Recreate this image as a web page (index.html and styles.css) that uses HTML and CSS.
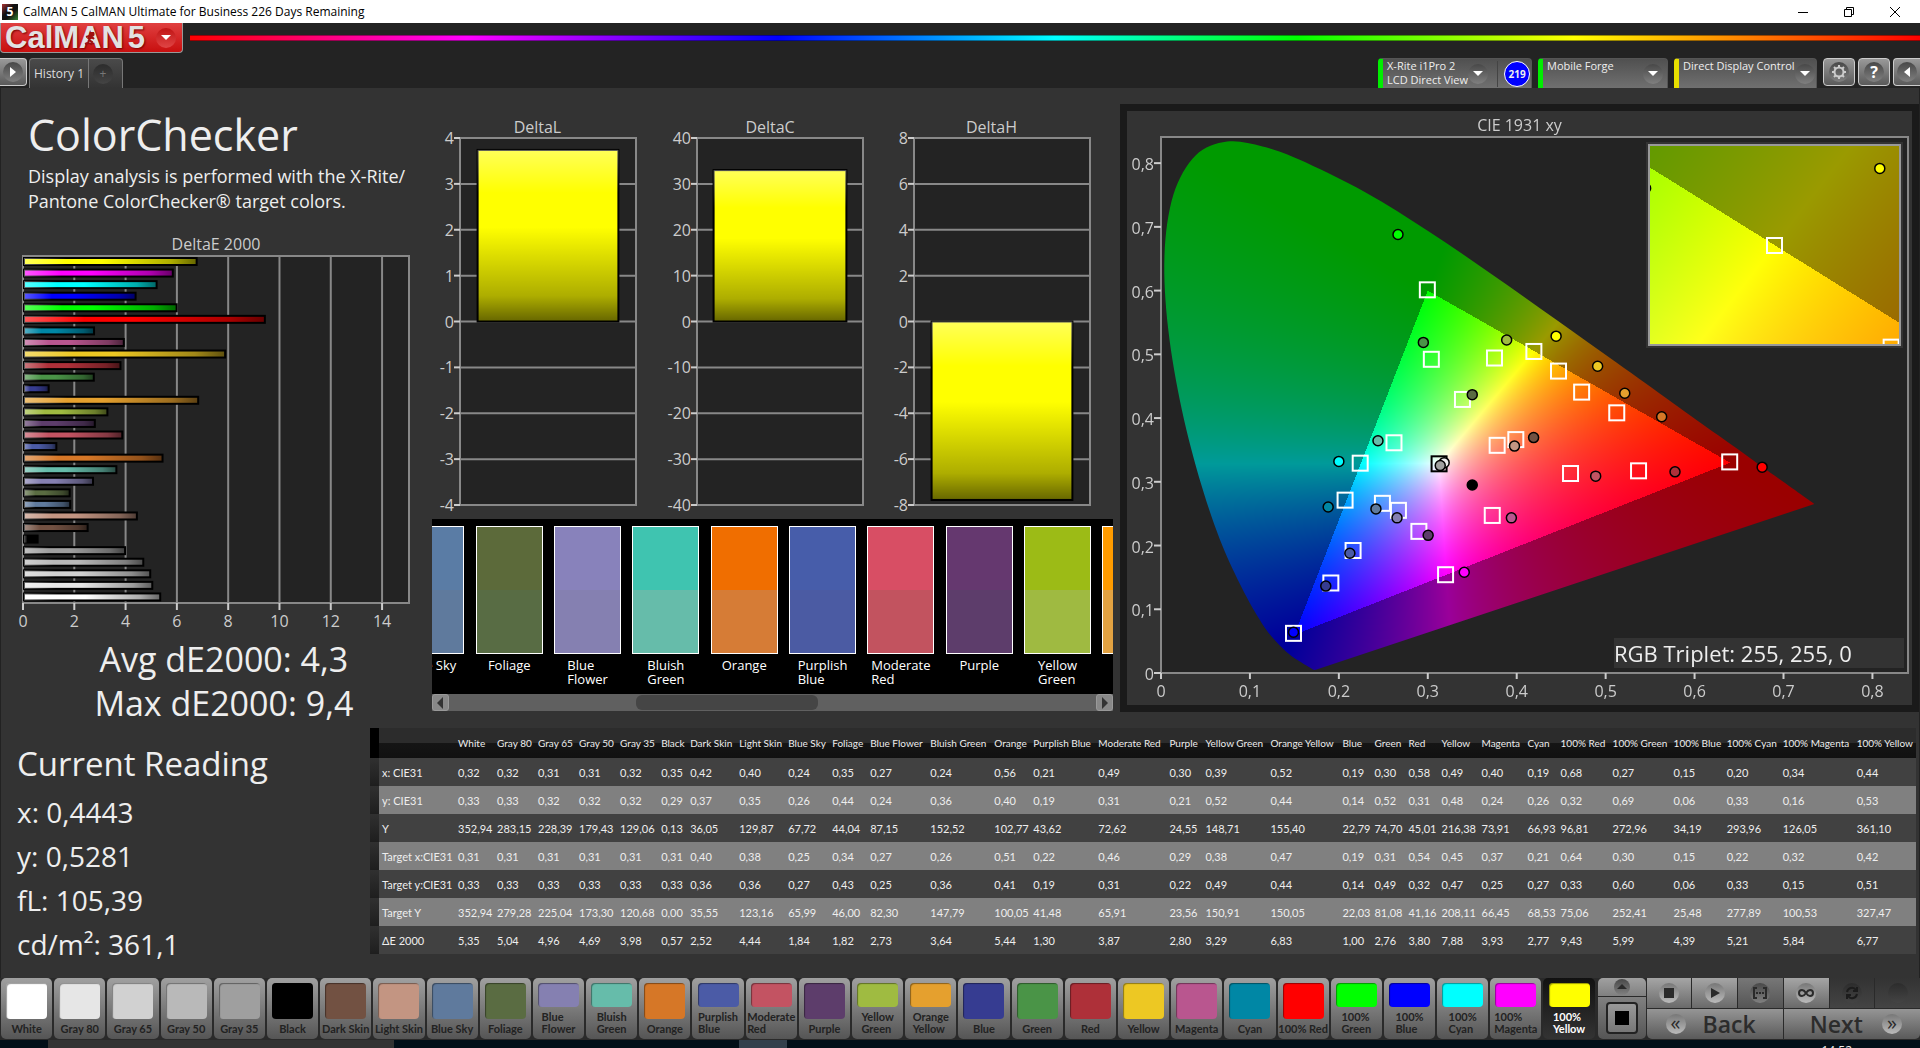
FILE: index.html
```
<!DOCTYPE html>
<html lang="en">

<head>
    <meta charset="UTF-8">
    <meta name="viewport" content="width=device-width, initial-scale=1.0">
    <title>CalMAN 5</title>
    <link rel="stylesheet" href="styles.css">
</head>

<body>
    <div class="titlebar">
        <span class="app-icon">5</span>
        <span class="app-title">CalMAN 5 CalMAN Ultimate for Business 226 Days Remaining</span>
        <div class="win-buttons">
            <button aria-label="Minimize"><svg width="12" height="12"><path d="M1 6.5h10" /></svg></button>
            <button aria-label="Restore"><svg width="12" height="12"><path d="M1.500 3.500h7v7h-7zM3.500 3.500v-2h7v7h-2" /></svg></button>
            <button aria-label="Close"><svg width="12" height="12"><path d="M1 1l10 10M11 1L1 11" /></svg></button>
        </div>
    </div>

    <header>
        <div class="brand-row">
            <button class="logo">
                <span class="logo-text">CalM<span class="logo-a">A<svg class="runner" width="12" height="14" viewBox="0 0 12 14"><circle cx="8" cy="2" r="1.600" /><path d="M2 5l3-1 3 1 2 2M7 5L5 8l3 2-1 3M5 8l-1 3-3 1" /></svg></span>N<span class="logo-five">5</span></span>
                <span class="round red"><svg width="10" height="6"><path d="M0 0h10L5 5z" /></svg></span>
            </button>
            <div class="spectrum"></div>
        </div>
        <div class="tab-row">
            <button class="key first" aria-label="Expand"><span class="round"><svg width="6" height="10"><path d="M0 0v10l6-5z" /></svg></span></button>
            <div class="tabs">
                <button class="tab">History 1</button>
                <button class="tab add" aria-label="Add tab"><span class="round dark">+</span></button>
            </div>
            <div class="devices">
                <div class="device meter">
                    <button class="device-name">X-Rite i1Pro 2<br>LCD Direct View</button>
                    <span class="round"><svg width="10" height="6"><path d="M0 0h10L5 5z" /></svg></span>
                    <span class="badge-cell"><span class="badge">219</span></span>
                </div>
                <div class="device source">
                    <button class="device-name">Mobile Forge</button>
                    <span class="round"><svg width="10" height="6"><path d="M0 0h10L5 5z" /></svg></span>
                </div>
                <div class="device display">
                    <button class="device-name">Direct Display Control</button>
                    <span class="round"><svg width="10" height="6"><path d="M0 0h10L5 5z" /></svg></span>
                </div>
                <div class="keys">
                    <button class="key" aria-label="Settings"><span class="round"><svg class="gear" width="16" height="16" viewBox="0 0 16 16"><circle cx="8" cy="8" r="4.500" /><path d="M8 1v2.500M8 12.500V15M1 8h2.500M12.500 8H15M3 3l2 2M11 11l2 2M13 3l-2 2M5 11l-2 2" /></svg></span></button>
                    <button class="key help" aria-label="Help"><span class="round">?</span></button>
                    <button class="key last" aria-label="Collapse"><span class="round"><svg width="6" height="10"><path d="M6 0v10L0 5z" /></svg></span></button>
                </div>
            </div>
        </div>
    </header>

    <main>
        <div class="top">
            <section class="summary">
                <h1>ColorChecker</h1>
                <p>Display analysis is performed with the X-Rite/<br>Pantone ColorChecker® target colors.</p>
                <svg id="deltaE" class="chart"></svg>
                <div class="totals">
                    <div>Avg dE2000: 4,3</div>
                    <div>Max dE2000: 9,4</div>
                </div>
            </section>

            <section class="middle">
                <div class="deltas">
                    <svg id="deltaL" class="chart"></svg>
                    <svg id="deltaC" class="chart"></svg>
                    <svg id="deltaH" class="chart"></svg>
                </div>
                <div class="strip" id="strip"></div>
                <div class="scrollbar">
                    <button aria-label="Scroll left"><svg width="6" height="12"><path d="M6 0v12L0 6z" /></svg></button>
                    <div class="track"><div class="thumb"></div></div>
                    <button aria-label="Scroll right"><svg width="6" height="12"><path d="M0 0v12l6-6z" /></svg></button>
                </div>
            </section>

            <section class="cie" id="cie">
                <canvas id="cieFill"></canvas>
                <svg id="cieMarks"></svg>
                <div class="triplet">RGB Triplet: 255, 255, 0</div>
            </section>
        </div>

        <div class="bottom">
            <section class="reading">
                <h2>Current Reading</h2>
                <div>x: 0,4443</div>
                <div>y: 0,5281</div>
                <div>fL: 105,39</div>
                <div>cd/m²: 361,1</div>
            </section>
            <div class="table-wrap">
                <table id="results"></table>
            </div>
        </div>
    </main>

    <footer>
        <div class="patches" id="patches"></div>
        <div class="window-size">
            <button class="up" aria-label="Up"><span class="round small"><svg width="10" height="6"><path d="M0 5h10L5 0z" /></svg></span></button>
            <button class="full" aria-label="Pattern window"><span class="frame"><span class="square"></span></span></button>
        </div>
        <div class="transport">
            <button aria-label="Stop"><span class="round pale"><svg width="10" height="10"><path d="M0 0h10v10H0z" /></svg></span></button>
            <button aria-label="Play"><span class="round pale"><svg width="10" height="12"><path d="M1 1v10l9-5z" /></svg></span></button>
            <button class="dim" aria-label="Read series"><span class="round"><svg class="line" width="14" height="12"><path d="M4 1H1v10h3M10 1h3v10h-3M3 6h2M6 6h2M9 6h2" /></svg></span></button>
            <button aria-label="Continuous"><span class="round pale"><svg class="line" width="16" height="10"><path d="M8 5C6 2 5 2 4 2a3 3 0 0 0 0 6c1 0 2 0 4-3s3-3 4-3a3 3 0 0 1 0 6c-1 0-2 0-4-3z" /></svg></span></button>
            <button class="off" aria-label="Refresh"><span class="round dark"><svg class="line heavy" width="14" height="14"><path d="M2 6a5 5 0 0 1 9-2M12 1v4H8M12 8a5 5 0 0 1-9 2M2 13V9h4" /></svg></span></button>
            <button class="off" aria-label="Record"><span class="round dark"></span></button>
            <button class="nav"><span class="round pale">«</span><span class="nav-text">Back</span></button>
            <button class="nav next"><span class="nav-text">Next</span><span class="round pale">»</span></button>
        </div>
    </footer>
    <div class="taskbar">
        <div class="task-search"></div>
        <div class="task-active"></div>
        <div class="clock">14:52</div>
    </div>

    <script src="script.js"></script>
</body>

</html>
```
FILE: styles.css
```
* {
    box-sizing: border-box;
}

body {
    margin: 0;
    height: 100vh;
    display: flex;
    flex-direction: column;
    overflow: hidden;
    background: #232323;
    color: #eee;
    font-family: "Open Sans", "Noto Sans", sans-serif;
}

button {
    font-family: inherit;
    border: none;
    padding: 0;
    margin: 0;
    background: none;
    color: inherit;
}

svg {
    display: block;
}

/* window title */
.titlebar {
    height: 23px;
    flex: none;
    display: flex;
    align-items: center;
    background: #fff;
    color: #000;
    font-size: 12px;
}

.app-icon {
    width: 16px;
    height: 16px;
    margin: 0 5px 0 2px;
    background: linear-gradient(135deg, #a33, #111 40%, #111 60%, #383);
    color: #fff;
    font-weight: bold;
    line-height: 16px;
    text-align: center;
}

.win-buttons {
    margin-left: auto;
    padding-right: 2px;
    display: flex;
}

.win-buttons button {
    width: 46px;
    height: 22px;
    display: flex;
    align-items: center;
    justify-content: center;
}

.win-buttons path {
    fill: none;
    stroke: #000;
}

/* header */
header {
    height: 65px;
    flex: none;
    display: flex;
    flex-direction: column;
    justify-content: space-between;
}

.brand-row {
    display: flex;
    gap: 7px;
}

.logo {
    width: 183px;
    height: 30px;
    padding: 0 6px 0 4px;
    display: flex;
    align-items: center;
    justify-content: space-between;
    border: 1px solid #999;
    border-top: none;
    border-radius: 0 0 4px 4px;
    background: linear-gradient(#e04040, #c80f0f);
}

.logo-text {
    font-family: "Liberation Sans", sans-serif;
    font-weight: bold;
    font-size: 31px;
    line-height: 26px;
    color: #e2e2e2;
    text-shadow: 1px 1px 2px #700;
}

.logo-a {
    position: relative;
}

.logo-five {
    margin-left: 4px;
}

.runner {
    position: absolute;
    left: 5px;
    top: 12px;
    fill: #a01010;
    stroke: #a01010;
    stroke-width: 2;
}

.runner path {
    fill: none;
}

.spectrum {
    flex: 1;
    height: 6px;
    margin-top: 12px;
    border-top: 1px solid rgba(0, 0, 0, 0.4);
    border-bottom: 1px solid rgba(0, 0, 0, 0.4);
    background: linear-gradient(to right, #f00, #f0f 16%, #00f 34%, #0ff 50%, #0f0 64%, #ff0 80%, #f00);
}

.round {
    width: 20px;
    height: 20px;
    flex: none;
    display: flex;
    align-items: center;
    justify-content: center;
    border-radius: 50%;
    background: linear-gradient(#484848, #808080);
    fill: #fff;
    color: #fff;
}

.round.red {
    background: linear-gradient(#c01515, #e04545);
}

.round.dark {
    background: linear-gradient(#2c2c2c, #444);
    color: #777;
}

.round.pale {
    background: linear-gradient(#777, #bbb);
}

.round.small {
    width: 16px;
    height: 16px;
}

.tab-row {
    height: 30px;
    display: flex;
    align-items: flex-start;
}

.key {
    width: 32px;
    height: 28px;
    display: flex;
    align-items: center;
    justify-content: center;
    border: 1px solid #ccc;
    border-radius: 4px;
    background: linear-gradient(#999, #5a5a5a);
}

.key.first {
    width: 27px;
    border-left: none;
    border-radius: 0 4px 4px 0;
}

.key.last {
    width: 27px;
    border-right: none;
    border-radius: 4px 0 0 4px;
}

.key.help {
    font-size: 16px;
    font-weight: bold;
}

.gear {
    fill: none;
    stroke: #ccc;
    stroke-width: 2;
}

.tabs {
    display: flex;
    height: 30px;
    margin-left: 2px;
    border: 1px solid #777;
    border-bottom: none;
    border-radius: 4px 4px 0 0;
    background: linear-gradient(#4a4a4a, #333);
}

.tab {
    padding: 0 4px;
    font-size: 12px;
    color: #ddd;
}

.tab.add {
    width: 34px;
    border-left: 1px solid #777;
}

.devices {
    margin-left: auto;
    display: flex;
    gap: 6px;
}

.device {
    height: 30px;
    display: flex;
    align-items: center;
    justify-content: space-between;
    border: 1px solid #555;
    border-bottom: none;
    border-left: 5px solid #0e0;
    border-radius: 4px 4px 0 0;
    background: linear-gradient(#505050, #707070);
}

.device-name {
    align-self: flex-start;
    padding-left: 4px;
    font-size: 11px;
    line-height: 14px;
    text-align: left;
    white-space: nowrap;
}

.meter {
    width: 154px;
}

.meter .round {
    margin: 0 9px 0 auto;
}

.source {
    width: 130px;
    padding-right: 4px;
}

.display {
    width: 143px;
    padding-right: 8px;
    border-left-color: #e8e000;
}

.badge-cell {
    padding: 0 1px 0 6px;
    border-left: 1px solid #444;
}

.badge {
    width: 26px;
    height: 26px;
    display: block;
    border: 1px solid #fff;
    border-radius: 50%;
    background: #00f;
    font-size: 10px;
    font-weight: bold;
    line-height: 24px;
    text-align: center;
}

.keys {
    display: flex;
    gap: 3px;
}

/* main area */
main {
    flex: 1;
    min-height: 0;
    display: grid;
    grid-template-rows: 64fr 25fr;
    background: #333;
    border-right: 1px solid #222;
    box-shadow: inset 1px 0 #222;
}

.top {
    min-height: 0;
    display: grid;
    grid-template-columns: 22.5% 35.5% 42%;
}

.summary {
    min-width: 0;
    padding-top: 18px;
    display: flex;
    flex-direction: column;
}

h1 {
    margin: 0 0 0 28px;
    font-size: 43px;
    line-height: 58px;
    font-weight: normal;
}

.summary p {
    margin: 0 0 0 28px;
    font-size: 18px;
    line-height: 25px;
    white-space: nowrap;
}

.chart {
    flex: 1;
    width: 100%;
    min-width: 0;
    min-height: 0;
}

.summary .chart {
    margin-top: 22px;
}

.totals {
    padding: 3px 0 3px 16px;
    font-size: 34px;
    line-height: 44px;
    text-align: center;
}

.middle {
    min-width: 0;
    padding: 25px 0 17px;
    display: flex;
    flex-direction: column;
}

.deltas {
    flex: 1;
    min-height: 0;
    display: grid;
    grid-template-columns: 205px 227px 1fr;
    padding-right: 22px;
}

.deltas .chart {
    height: 100%;
}

svg text {
    font-size: 16px;
    fill: #ccc;
}

.strip {
    height: 175px;
    padding-top: 7px;
    display: flex;
    overflow: hidden;
    background: #000;
}

.strip-item {
    flex: 0 0 11.5%;
    display: flex;
    flex-direction: column;
    align-items: center;
    font-size: 13px;
    line-height: 14px;
    color: #fff;
    white-space: nowrap;
}

.strip-item:first-child {
    margin-left: -40px;
}

.strip-color {
    width: 67px;
    height: 128px;
    margin-bottom: 4px;
    border: 1px solid #fff;
}

.strip-color div {
    height: 50%;
}

.scrollbar {
    height: 17px;
    display: flex;
    background: #606060;
}

.scrollbar button {
    width: 17px;
    display: flex;
    align-items: center;
    justify-content: center;
    border: 1px solid #999;
    border-radius: 3px;
    background: #888;
    fill: #333;
}

.track {
    flex: 1;
    padding: 1px 0;
}

.thumb {
    width: 28%;
    height: 15px;
    margin-left: 29%;
    border-radius: 6px;
    background: #454545;
}

.cie {
    position: relative;
    min-width: 0;
    margin: 16px 0 16px 7px;
    border: 7px solid #1a1a1a;
    background: #333;
}

.cie canvas,
.cie > svg {
    position: absolute;
    left: 0;
    top: 0;
    width: 100%;
    height: 100%;
}

.triplet {
    position: absolute;
    right: 8px;
    bottom: 37px;
    width: 290px;
    background: #333;
    font-size: 22px;
    line-height: 30px;
}

.bottom {
    min-height: 0;
    display: grid;
    grid-template-columns: 370px 1fr;
}

.reading {
    padding: 14px 0 0 17px;
    font-size: 28px;
    line-height: 44px;
}

h2 {
    margin: 0 0 4px;
    font-size: 33px;
    line-height: 44px;
    font-weight: normal;
}

/* results */
.table-wrap {
    padding-right: 3px;
}

table {
    width: 100%;
    border-collapse: collapse;
    table-layout: fixed;
    font-family: Lato, sans-serif;
    font-size: 11px;
    white-space: nowrap;
}

th,
td {
    padding: 0 0 0 3px;
    text-align: left;
    font-weight: normal;
}

thead tr {
    height: 30px;
    background: linear-gradient(#2c2c2c 50%, #151515 50%, #111);
}

thead th {
    font-size: 10px;
}

tbody tr {
    height: 28px;
    background: #414141;
}

tbody tr:nth-child(even) {
    background: #808080;
}

.gutter {
    background: linear-gradient(#303030, #1e1e1e);
}

thead .gutter {
    background: #000;
}

/* bottom bar */
footer {
    height: 62px;
    flex: none;
    display: flex;
    background: #2a2a2a;
    color: #222;
}

.patches {
    flex: 0 0 83.1%;
    display: flex;
    gap: 2px;
    padding: 0 1px;
}

.patch {
    flex: 1 1 0;
    min-width: 0;
    height: 61px;
    padding: 5px 0 4px;
    display: flex;
    flex-direction: column;
    align-items: center;
    border-radius: 5px;
    background: linear-gradient(#a0a0a0, #555);
    font-family: Lato, sans-serif;
    font-size: 11px;
    font-weight: bold;
    line-height: 12px;
    text-align: left;
    white-space: nowrap;
}

.patch i {
    flex: 1;
    width: 41px;
    margin-bottom: 4px;
    border-radius: 4px;
    box-shadow: inset 1px 1px 1px rgba(0, 0, 0, 0.4);
}

.patch.active {
    background: linear-gradient(#111, #333);
    color: #fff;
}

.window-size {
    width: 48px;
    margin: 0 1px 0 2px;
    display: flex;
    flex-direction: column;
    gap: 1px;
}

.window-size button {
    display: flex;
    align-items: center;
    justify-content: center;
    background: linear-gradient(#a0a0a0, #808080);
}

.window-size .up {
    height: 18px;
    border-radius: 5px 5px 0 0;
}

.window-size .full {
    height: 42px;
    border-radius: 0 0 5px 5px;
    background: linear-gradient(#808080, #555);
}

.window-size svg,
.transport svg {
    fill: #2a2a2a;
}

.frame {
    width: 32px;
    height: 32px;
    padding: 7px;
    border: 2px solid #222;
    border-radius: 4px;
    background: linear-gradient(#999, #777);
}

.square {
    display: block;
    height: 14px;
    background: #000;
}

.transport {
    flex: 1;
    display: grid;
    grid-template-columns: repeat(6, 1fr);
    grid-template-rows: 30px 30px;
    gap: 1px;
}

.transport button {
    display: flex;
    align-items: center;
    justify-content: center;
    background: linear-gradient(#a5a5a5, #6a6a6a);
}

.transport .dim {
    background: linear-gradient(#777, #555);
}

.transport .off {
    background: linear-gradient(#333, #444);
}

.transport .line {
    fill: none;
    stroke: #2a2a2a;
    stroke-width: 2;
}

.transport .heavy {
    stroke: #1c1c1c;
}

.transport .nav {
    grid-column: span 3;
    gap: 17px;
    padding-right: 8px;
    border-radius: 0 0 0 5px;
    background: linear-gradient(#959595, #5a5a5a);
}

.transport .next {
    gap: 19px;
    padding: 0 0 0 8px;
    border-radius: 0 0 5px 0;
}

.nav .round {
    color: #2a2a2a;
    font-size: 20px;
    line-height: 16px;
    padding-bottom: 3px;
}

.nav-text {
    font-size: 23px;
    line-height: 28px;
    font-weight: 600;
    color: #2c2c2c;
}

.taskbar {
    height: 8px;
    flex: none;
    display: flex;
    overflow: hidden;
    background: #020f18;
}

.task-search {
    flex: 0 0 18%;
    margin-left: 2.5%;
    background: #333;
}

.task-active {
    flex: 0 0 2.5%;
    margin-left: 18%;
    background: #33404c;
}

.clock {
    margin: 3px 68px 0 auto;
    font-size: 12px;
    line-height: 16px;
}
```
FILE: script.js
```
const names = ['White', 'Gray 80', 'Gray 65', 'Gray 50', 'Gray 35', 'Black', 'Dark Skin', 'Light Skin', 'Blue Sky', 'Foliage',
    'Blue Flower', 'Bluish Green', 'Orange', 'Purplish Blue', 'Moderate Red', 'Purple', 'Yellow Green', 'Orange Yellow', 'Blue', 'Green',
    'Red', 'Yellow', 'Magenta', 'Cyan', '100% Red', '100% Green', '100% Blue', '100% Cyan', '100% Magenta', '100% Yellow'];

const colors = ['#fff', '#e6e6e6', '#d1d1d1', '#b9b9b9', '#9f9f9f', '#000', '#725142', '#c39582', '#5f7a9d', '#5a6c42',
    '#8580b1', '#66bcaa', '#d67727', '#4b5ba6', '#c35362', '#5d3d6b', '#9fbb41', '#e5a02e', '#363c91', '#4a9447',
    '#ae3039', '#edc823', '#b9568f', '#0087a5', '#f00', '#0f0', '#00f', '#0ff', '#f0f', '#ff0'];

const rows = {
    'x: CIE31': '0,32 0,32 0,31 0,31 0,32 0,35 0,42 0,40 0,24 0,35 0,27 0,24 0,56 0,21 0,49 0,30 0,39 0,52 0,19 0,30 0,58 0,49 0,40 0,19 0,68 0,27 0,15 0,20 0,34 0,44',
    'y: CIE31': '0,33 0,33 0,32 0,32 0,32 0,29 0,37 0,35 0,26 0,44 0,24 0,36 0,40 0,19 0,31 0,21 0,52 0,44 0,14 0,52 0,31 0,48 0,24 0,26 0,32 0,69 0,06 0,33 0,16 0,53',
    'Y': '352,94 283,15 228,39 179,43 129,06 0,13 36,05 129,87 67,72 44,04 87,15 152,52 102,77 43,62 72,62 24,55 148,71 155,40 22,79 74,70 45,01 216,38 73,91 66,93 96,81 272,96 34,19 293,96 126,05 361,10',
    'Target x:CIE31': '0,31 0,31 0,31 0,31 0,31 0,31 0,40 0,38 0,25 0,34 0,27 0,26 0,51 0,22 0,46 0,29 0,38 0,47 0,19 0,31 0,54 0,45 0,37 0,21 0,64 0,30 0,15 0,22 0,32 0,42',
    'Target y:CIE31': '0,33 0,33 0,33 0,33 0,33 0,33 0,36 0,36 0,27 0,43 0,25 0,36 0,41 0,19 0,31 0,22 0,49 0,44 0,14 0,49 0,32 0,47 0,25 0,27 0,33 0,60 0,06 0,33 0,15 0,51',
    'Target Y': '352,94 279,28 225,04 173,30 120,68 0,00 35,55 123,16 65,99 46,00 82,30 147,79 100,05 41,48 65,91 23,56 150,91 150,05 22,03 81,08 41,16 208,11 66,45 68,53 75,06 252,41 25,48 277,89 100,53 327,47',
    'ΔE 2000': '5,35 5,04 4,96 4,69 3,98 0,57 2,52 4,44 1,84 1,82 2,73 3,64 5,44 1,30 3,87 2,80 3,29 6,83 1,00 2,76 3,80 7,88 3,93 2,77 9,43 5,99 4,39 5,21 5,84 6,77'
};

// relative widths: gutter, row label, then one per color
const colWidths = [9, 76, 39, 41, 41, 41, 41, 29, 49, 49, 44, 38, 60, 64, 39, 65, 71, 36, 65, 72, 32, 34, 33, 40, 46, 33, 52, 61, 53, 56, 74, 62];

// measured color on top, target below
const strip = [
    ['Blue Sky', '#5a7ca5', '#5f7a9d'],
    ['Foliage', '#5c6a3a', '#586c44'],
    ['Blue<br>Flower', '#8882bb', '#8580b1'],
    ['Bluish<br>Green', '#3fc4b0', '#66bcaa'],
    ['Orange', '#f06e00', '#d67c36'],
    ['Purplish<br>Blue', '#475daa', '#4b5ba3'],
    ['Moderate<br>Red', '#d84e64', '#c2535f'],
    ['Purple', '#65386f', '#5d3d6b'],
    ['Yellow<br>Green', '#9cbb16', '#9fba41'],
    ['Orange<br>Yellow', '#ff9b00', '#e2a242']
];

const targets = [[.2995, .602], [.304, .493], [.375, .495], [.339, .43], [.262, .362], [.224, .33], [.378, .358], [.207, .272],
    [.249, .267], [.267, .256], [.29, .223], [.3725, .248], [.216, .193], [.191, .142], [.32, .155], [.149, .063], [.4193, .5053],
    [.447, .4745], [.473, .4415], [.5125, .409], [.399, .367], [.4605, .3138], [.537, .318], [.6395, .332]];

const measured = [[.2665, .688, '#0f0'], [.295, .5187, '#4a9447'], [.3887, .5225, '#9fbb41'], [.35, .4367, '#5a6c42'],
    [.244, .3645, '#66bcaa'], [.2, .332, '#0ff'], [.188, .2605, '#0087a5'], [.2417, .2575, '#5f7a9d'], [.2654, .2434, '#8580b1'],
    [.3004, .216, '#5d3d6b'], [.35, .295, '#000'], [.394, .2434, '#b9568f'], [.2124, .1878, '#4b5ba6'], [.1853, .1364, '#363c91'],
    [.341, .158, '#f0f'], [.149, .064, '#00f'], [.3184, .33, '#eee'], [.314, .3254, '#a0a0a0'], [.4443, .5285, '#ff0'],
    [.491, .4813, '#edc823'], [.5215, .439, '#e5a02e'], [.563, .402, '#d67727'], [.419, .3694, '#725142'], [.3975, .356, '#c39582'],
    [.4888, .3089, '#c35362'], [.578, .3156, '#ae3039'], [.676, .323, '#f00']];

const locus = [[.1741, .005], [.1714, .0051], [.1644, .0109], [.1566, .0177], [.144, .0297], [.1241, .0578], [.1096, .0868],
    [.0913, .1327], [.0687, .2007], [.0454, .295], [.0235, .4127], [.0082, .5384], [.0039, .6548], [.0139, .7502], [.0389, .812],
    [.0743, .8338], [.1142, .8262], [.1547, .8059], [.2296, .7543], [.3016, .6923], [.3731, .6245], [.4441, .5547], [.5125, .4866],
    [.5752, .4242], [.627, .3725], [.6658, .334], [.6915, .3083], [.719, .2809], [.7347, .2653]];

function num(text) {
    return parseFloat(text.replace(',', '.'));
}

function line(x1, y1, x2, y2, color, width) {
    return `<line x1="${x1}" y1="${y1}" x2="${x2}" y2="${y2}" stroke="${color}" stroke-width="${width}"/>`;
}

function label(x, y, text, anchor) {
    return `<text x="${x}" y="${y}" text-anchor="${anchor}">${text}</text>`;
}

function shade(id, x2, y2) {
    return `<defs><linearGradient id="${id}" x2="${x2}" y2="${y2}">
        <stop offset="0" stop-color="#fff" stop-opacity="0.35"/><stop offset="0.25" stop-color="#fff" stop-opacity="0"/>
        <stop offset="0.45" stop-color="#000" stop-opacity="0"/><stop offset="0.85" stop-color="#000" stop-opacity="0.32"/>
        <stop offset="1" stop-color="#000" stop-opacity="0.6"/></linearGradient></defs>`;
}

function bar(x, y, w, h, color, shadeId) {
    const box = `x="${x}" y="${y}" width="${w}" height="${h}"`;
    return `<rect ${box} fill="${color}" stroke="#000" stroke-width="2"/><rect ${box} fill="url(#${shadeId})"/>`;
}

function drawDeltaE() {
    const svg = document.getElementById('deltaE');
    const left = 23, top = 20, right = svg.clientWidth - 23, bottom = svg.clientHeight - 31;
    const unit = (right - left) / 15.05;
    let out = shade('shadeH', 1, 0);
    out += `<rect x="${left}" y="${top}" width="${right - left}" height="${bottom - top}" fill="#232323" stroke="#888" stroke-width="2"/>`;
    for (let v = 0; v <= 14; v += 2) {
        const x = left + v * unit;
        out += line(x, top, x, bottom, '#888', 2) + line(x, bottom, x, bottom + 7, '#ccc', 2);
        out += label(x, bottom + 24, v, 'middle');
    }
    const values = rows['ΔE 2000'].split(' ').map(num).reverse();
    const step = (bottom - top) / values.length;
    values.forEach((v, i) => {
        out += bar(left + 1, top + i * step + 2, v * unit - 1, 7, colors[29 - i], 'shadeH');
    });
    out += label((left + right) / 2, top - 6, 'DeltaE 2000', 'middle');
    svg.innerHTML = out;
}

function drawDelta(id, left, max, value) {
    const svg = document.getElementById(id);
    const top = 25, right = svg.clientWidth - 1, bottom = svg.clientHeight - 14;
    const w = right - left, half = (bottom - top) / 2, zero = top + half;
    let out = shade(id + 'Shade', 0, 1);
    out += `<rect x="${left}" y="${top}" width="${w}" height="${bottom - top}" fill="#232323" stroke="#888" stroke-width="2"/>`;
    for (let i = -4; i <= 4; i++) {
        const y = zero - i * half / 4;
        out += line(left, y, right, y, '#888', 2) + line(left - 6, y, left, y, '#ccc', 2);
        out += label(left - 6, y + 6, i * max / 4, 'end');
    }
    const h = Math.abs(value) / max * half;
    out += bar(left + w * 0.1, value > 0 ? zero - h : zero, w * 0.8, h, '#ff0', id + 'Shade');
    out += label(left + w * 0.44, top - 5, id.replace('d', 'D'), 'middle');
    svg.innerHTML = out;
}

// fill an area with the chromaticity colors, darker outside Rec.709
function fillColors(ctx, area) {
    const w = Math.round(area.w), h = Math.round(area.h);
    const tmp = document.createElement('canvas');
    tmp.width = w;
    tmp.height = h;
    const tctx = tmp.getContext('2d');
    const img = tctx.createImageData(w, h);
    for (let j = 0; j < h; j++) {
        for (let i = 0; i < w; i++) {
            const x = area.x0 + (i + 0.5) / w * (area.x1 - area.x0);
            const y = area.y1 - (j + 0.5) / h * (area.y1 - area.y0);
            const X = x / y, Z = (1 - x - y) / y;
            const r = 3.2406 * X - 1.5372 - 0.4986 * Z;
            const g = -0.9689 * X + 1.8758 + 0.0415 * Z;
            const b = 0.0557 * X - 0.204 + 1.057 * Z;
            const k = (Math.min(r, g, b) < 0 ? 154 : 255) / Math.max(r, g, b);
            const p = (j * w + i) * 4;
            img.data[p] = r * k;
            img.data[p + 1] = g * k;
            img.data[p + 2] = b * k;
            img.data[p + 3] = 255;
        }
    }
    tctx.putImageData(img, 0, 0);
    ctx.drawImage(tmp, area.left, area.top);
}

function marks(area, offX, offY) {
    const px = x => offX + (x - area.x0) / (area.x1 - area.x0) * area.w;
    const py = y => offY + (area.y1 - y) / (area.y1 - area.y0) * area.h;
    const square = (x, y, c) => `<rect x="${px(x) - 7.5}" y="${py(y) - 7}" width="15" height="15" fill="none" stroke="${c}" stroke-width="2"/>`;
    let out = targets.map(t => square(t[0], t[1], '#fff')).join('');
    out += square(.3127, .329, '#000');
    out += measured.map(m => `<circle cx="${px(m[0])}" cy="${py(m[1])}" r="5" fill="${m[2]}" stroke="#000" stroke-width="1.5"/>`).join('');
    return out;
}

function drawCie() {
    const box = document.getElementById('cie');
    const W = box.clientWidth, H = box.clientHeight;
    const canvas = document.getElementById('cieFill');
    canvas.width = W;
    canvas.height = H;
    const ctx = canvas.getContext('2d');
    const a = { left: 34, top: 26, w: W - 38, h: H - 58, x0: 0, x1: 0.84, y0: 0, y1: 0.841 };
    ctx.fillStyle = '#232323';
    ctx.fillRect(a.left, a.top, a.w, a.h);

    const pts = locus.map(p => [a.left + p[0] / a.x1 * a.w, a.top + (a.y1 - p[1]) / a.y1 * a.h]);
    ctx.save();
    ctx.beginPath();
    ctx.moveTo(pts[0][0], pts[0][1]);
    for (let i = 0; i < pts.length - 1; i++) {
        const p0 = pts[Math.max(i - 1, 0)], p1 = pts[i], p2 = pts[i + 1], p3 = pts[Math.min(i + 2, pts.length - 1)];
        ctx.bezierCurveTo(p1[0] + (p2[0] - p0[0]) / 6, p1[1] + (p2[1] - p0[1]) / 6,
            p2[0] - (p3[0] - p1[0]) / 6, p2[1] - (p3[1] - p1[1]) / 6, p2[0], p2[1]);
    }
    ctx.closePath();
    ctx.clip();
    fillColors(ctx, a);
    ctx.restore();

    // magnified view round the current target
    const z = { w: Math.round(a.w * 0.336), h: Math.round(a.h * 0.374), x0: .3895, x1: .4491, y0: .475, y1: .5356 };
    z.left = a.left + a.w - z.w - 8;
    z.top = a.top + 8;
    ctx.fillStyle = '#333';
    ctx.fillRect(z.left - 3, z.top - 3, z.w + 6, z.h + 6);
    fillColors(ctx, z);

    let out = `<rect x="${a.left}" y="${a.top}" width="${a.w}" height="${a.h}" fill="none" stroke="#888" stroke-width="2"/>`;
    for (let i = 0; i <= 8; i++) {
        const x = a.left + i / 10 / a.x1 * a.w, y = a.top + a.h - i / 10 / a.y1 * a.h;
        const text = i ? '0,' + i : '0';
        out += line(x, a.top + a.h, x, a.top + a.h + 6, '#ccc', 2) + label(x, a.top + a.h + 24, text, 'middle');
        out += line(a.left - 7, y, a.left, y, '#ccc', 2) + label(a.left - 7, y + 7, text, 'end');
    }
    out += label(W / 2, 20, 'CIE 1931 xy', 'middle');
    out += marks(a, a.left, a.top);
    out += `<svg x="${z.left}" y="${z.top}" width="${z.w}" height="${z.h}">${marks(z, 0, 0)}</svg>`;
    out += `<rect x="${z.left}" y="${z.top}" width="${z.w}" height="${z.h}" fill="none" stroke="#999" stroke-width="2"/>`;
    document.getElementById('cieMarks').innerHTML = out;
}

function buildTable() {
    const total = colWidths.reduce((a, b) => a + b, 0);
    let out = '<colgroup>' + colWidths.map(w => `<col style="width:${w / total * 100}%">`).join('') + '</colgroup>';
    out += '<thead><tr><th class="gutter"></th><th></th>' + names.map(n => `<th scope="col">${n}</th>`).join('') + '</tr></thead><tbody>';
    for (const name in rows) {
        out += `<tr><td class="gutter"></td><th scope="row">${name}</th>` + rows[name].split(' ').map(v => `<td>${v}</td>`).join('') + '</tr>';
    }
    document.getElementById('results').innerHTML = out + '</tbody>';
}

function buildPatches() {
    document.getElementById('patches').innerHTML = names.map((n, i) => {
        const text = n.length > 10 || i > 24 ? n.replace(' ', '<br>') : n;
        const active = i === names.length - 1 ? ' active' : '';
        return `<button class="patch${active}"><i style="background:${colors[i]}"></i><span>${text}</span></button>`;
    }).join('');
}

function buildStrip() {
    document.getElementById('strip').innerHTML = strip.map(s =>
        `<div class="strip-item"><div class="strip-color"><div style="background:${s[1]}"></div><div style="background:${s[2]}"></div></div><span>${s[0]}</span></div>`
    ).join('');
}

function drawCharts() {
    drawDeltaE();
    drawDelta('deltaL', 28, 4, 3.74);
    drawDelta('deltaC', 60, 40, 33);
    drawDelta('deltaH', 50, 8, -7.78);
    drawCie();
}

buildTable();
buildPatches();
buildStrip();
drawCharts();
window.addEventListener('resize', drawCharts);
```
